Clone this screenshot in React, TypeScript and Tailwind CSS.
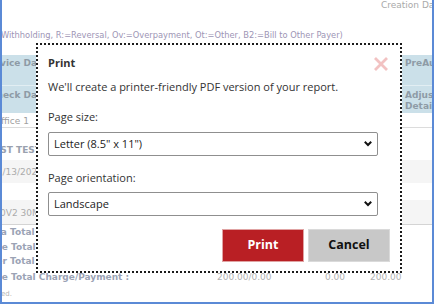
import React from "react";

type SelectBoxProps = { value: string; className?: string };

const SelectBox: React.FC<SelectBoxProps> = ({ value, className }) => (
  <div
    className={`flex h-[24px] w-[330px] items-center justify-between rounded-[2px] border border-[#8f8f8f] bg-white pl-[5px] pr-[4px] text-[11px] leading-[16px] text-[#222] ${className ?? ""}`}
  >
    <span>{value}</span>
    <svg width="10" height="10" viewBox="0 0 10 10" fill="none">
      <path d="M2.5 3.5 L5 6 L7.5 3.5" stroke="#111" strokeWidth="2" strokeLinecap="square" />
    </svg>
  </div>
);

export default function App() {
  return (
    <div className="h-[306px] w-[436px] bg-white">
      <div className="relative h-[304px] w-[434px] overflow-hidden border-x-2 border-b-2 border-[#5b8ad6] font-['DejaVu_Sans',sans-serif]">
        {/* report behind the dialog */}
        <div className="h-[12px] whitespace-nowrap pl-[379px] text-[9px] leading-[10px] text-[#a9a9a9]">
          Creation Date
        </div>
        <div className="-ml-[1px] mt-[18px] h-[10px] whitespace-nowrap text-[8.3px] leading-[10px] text-[#9d95b5]">
          Withholding, R:=Reversal, Ov:=Overpayment, Ot:=Other, B2:=Bill to Other Payer)
        </div>

        <div className="mt-[15px] flex flex-col text-[9px] leading-[10px]">
          {/* header */}
          <div className="flex h-[31px] border-b border-[#e2eef3] bg-[#cbe0e9] font-bold text-[#8e9ba6]">
            <div className="w-[34px] overflow-hidden whitespace-nowrap pt-[3px]">
              <span className="-ml-[19px] inline-block">Service Date</span>
            </div>
            <div className="flex-1" />
            <div className="w-[30px] overflow-hidden whitespace-nowrap pl-[3px] pt-[3px]">PreAuth</div>
          </div>
          <div className="flex h-[27px] bg-[#cbe0e9] font-bold text-[#8e9ba6]">
            <div className="w-[34px] overflow-hidden whitespace-nowrap pt-[4px]">
              <span className="-ml-[12px] inline-block">Check Date</span>
            </div>
            <div className="flex-1" />
            <div className="w-[30px] overflow-hidden whitespace-nowrap pl-[3px] pt-[4px] leading-[11px]">
              Adjustment
              <br />
              Details
            </div>
          </div>
          <div className="flex h-[15px] border-b border-[#dcdcdc] text-[#a0a0a0]">
            <div className="w-[34px] overflow-hidden whitespace-nowrap pt-[3px]">
              <span className="-ml-[8px] inline-block">Office 1</span>
            </div>
          </div>
          <div className="flex h-[32px] font-bold text-[#9aa1ae]">
            <div className="w-[34px] overflow-hidden whitespace-nowrap pt-[17px]">
              <span className="-ml-[14px] inline-block">TEST TEST</span>
            </div>
          </div>
          <div className="flex h-[23px] bg-[#f5f5f5] text-[#ababab]">
            <div className="w-[34px] overflow-hidden whitespace-nowrap pt-[7px]">
              <span className="-ml-[11px] inline-block">01/13/2024</span>
            </div>
          </div>
          <div className="h-[17px]" />
          <div className="flex h-[25px] border-b border-[#d4d4d4] bg-[#f5f5f5] text-[#ababab]">
            <div className="w-[34px] overflow-hidden whitespace-nowrap pt-[8px]">
              <span className="-ml-[2px] inline-block">0V2 30MG</span>
            </div>
          </div>

          {/* totals */}
          <div className="flex flex-col font-bold text-[#9ba3b5]">
            <div className="h-[15px] overflow-hidden whitespace-nowrap pt-[2px]">
              <span className="-ml-[19px] inline-block">Data Total</span>
            </div>
            <div className="h-[14px] overflow-hidden whitespace-nowrap pt-[2px]">
              <span className="-ml-[19px] inline-block">Page Total</span>
            </div>
            <div className="h-[15px] overflow-hidden whitespace-nowrap pt-[2px]">
              <span className="-ml-[24px] inline-block">Other Total</span>
            </div>
            <div className="flex h-[16px] whitespace-nowrap pt-[3px]">
              <div className="w-[215px] overflow-hidden">
                <span className="-ml-[19px] inline-block">Page Total Charge/Payment :</span>
              </div>
              <div className="w-[108px] font-normal text-[#b3b3b3]">200.00/0.00</div>
              <div className="w-[45px] font-normal text-[#b3b3b3]">0.00</div>
              <div className="font-normal text-[#b3b3b3]">200.00</div>
            </div>
          </div>
          <div className="pt-[4px] text-[7px] leading-[10px] text-[#b5b5b5]">
            <span className="-ml-[1px] inline-block">ed.</span>
          </div>
        </div>

        {/* print dialog */}
        <div className="absolute left-[34px] top-[43px] flex h-[230px] w-[366px] flex-col border-2 border-dotted border-[#1c1c1c] bg-white px-[10px] pt-[10px] font-['Open_Sans',sans-serif] text-[#333]">
          <div className="flex h-[16px] items-center justify-between">
            <span className="text-[11px] font-bold leading-[16px]">Print</span>
            <svg width="16" height="16" viewBox="0 0 16 16" className="mr-[1px] mt-[2px]">
              <path d="M2 2 L14 14 M14 2 L2 14" stroke="#f2c2c2" strokeWidth="2.8" />
            </svg>
          </div>
          <p className="mt-[8px] text-[11px] leading-[16px]">
            We'll create a printer-friendly PDF version of your report.
          </p>
          <p className="mt-[14px] text-[11px] leading-[16px]">Page size:</p>
          <SelectBox className="mt-[7px]" value={'Letter (8.5" x 11")'} />
          <p className="mt-[14px] text-[11px] leading-[16px]">Page orientation:</p>
          <SelectBox className="mt-[6px]" value="Landscape" />
          <div className="mt-[13px] flex justify-end gap-[4px]">
            <button className="h-[33px] w-[82px] border border-[#e0a3a3] bg-[#b91f24] text-[12.5px] font-bold text-white">
              Print
            </button>
            <button className="h-[33px] w-[82px] border border-[#dadada] bg-[#c8c8c8] text-[12.5px] font-bold text-[#111]">
              Cancel
            </button>
          </div>
        </div>
      </div>
    </div>
  );
}
